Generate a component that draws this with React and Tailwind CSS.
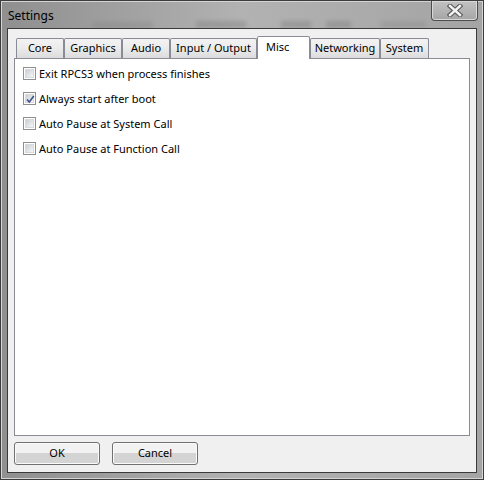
import React from "react"

const tabs = [
  { label: "Core", w: "w-[48px]" },
  { label: "Graphics", w: "w-[58px]" },
  { label: "Audio", w: "w-[48px]" },
  { label: "Input / Output", w: "w-[87px]" },
  { label: "Misc", w: "w-[53px]", active: true },
  { label: "Networking", w: "w-[70px]" },
  { label: "System", w: "w-[49px]" },
]

const options = [
  { label: "Exit RPCS3 when process finishes", checked: false },
  { label: "Always start after boot", checked: true },
  { label: "Auto Pause at System Call", checked: false },
  { label: "Auto Pause at Function Call", checked: false },
]

function Checkbox({ checked }) {
  return (
    <div className="w-[13px] h-[13px] border border-[#8e8f8f] bg-white p-[1px] shrink-0">
      <div className="relative w-full h-full bg-gradient-to-br from-[#cbcfd5] to-[#f6f6f6] border border-[#d7d9dc]">
        {checked && (
          <svg className="absolute -left-[1px] -top-[1px]" width="11" height="11" viewBox="0 0 11 11">
            <path d="M2 5.5 L4.3 8 L8.8 2" fill="none" stroke="#3e5590" strokeWidth="1.7" />
          </svg>
        )}
      </div>
    </div>
  )
}

function Tab({ label, w, active }) {
  if (active) {
    return (
      <div className={`${w} h-[23px] -mb-[1px] relative z-10 bg-white border border-b-0 border-[#898c95] rounded-t-[2px] flex items-start justify-start pl-[8px] pt-[2px] text-[11px] text-black`}>
        {label}
      </div>
    )
  }
  return (
    <div className={`${w} h-[20px] bg-gradient-to-b from-[#f3f3f3] via-[#ebebeb] to-[#dcdcdc] border border-b-0 border-[#898c95] rounded-t-[2px] flex items-center justify-center text-[11px] text-black`}>
      {label}
    </div>
  )
}

function Button({ children }) {
  return (
    <div className="w-[86px] h-[23px] rounded-[3px] border border-[#707070] bg-gradient-to-b from-[#f2f2f2] from-50% to-[#d4d4d4] to-50% shadow-[inset_0_0_0_1px_#fbfbfb] flex items-center justify-center text-[11px] text-black">
      {children}
    </div>
  )
}

export default function App() {
  return (
    <div
      className="relative overflow-hidden w-[484px] h-[480px] flex flex-col border border-[#3c3c3c] bg-gradient-to-r from-[#8f8f8f] via-[#b2b2b2] to-[#a4a4a4] shadow-[inset_0_0_0_1px_#d4d4d4] pt-[27px] px-[6px] pb-[6px]"
      style={{ fontFamily: '"Noto Sans", "Open Sans", sans-serif' }}
    >
      {/* blurred background showing through the glass */}
      <div className="absolute left-[92px] top-[21px] w-[60px] h-[6px] bg-[#7a7a7a] blur-[2px] opacity-30" />
      <div className="absolute left-[195px] top-[20px] w-[50px] h-[7px] bg-[#6a6a6a] blur-[2px] opacity-30" />
      <div className="absolute left-[280px] top-[20px] w-[30px] h-[7px] bg-[#6a6a6a] blur-[2px] opacity-30" />
      <div className="absolute left-[325px] top-[20px] w-[25px] h-[7px] bg-[#6a6a6a] blur-[2px] opacity-30" />
      <div className="absolute left-[380px] top-[20px] w-[45px] h-[7px] bg-[#7a7a7a] blur-[2px] opacity-25" />

      <div className="absolute left-[7px] top-[9px] text-[12px] leading-none text-black">Settings</div>

      <div className="absolute top-0 right-[5px] w-[47px] h-[20px] rounded-b-[4px] border border-t-0 border-[#4d4d4d] bg-gradient-to-b from-[#c2c2c2] to-[#a5a5a5] shadow-[inset_0_0_0_1px_#d9d9d9] flex items-center justify-center">
        <svg width="16" height="13" viewBox="0 0 16 13">
          <path d="M3 2 L13 11 M13 2 L3 11" stroke="#5a5a5a" strokeWidth="4.6" strokeLinecap="square" />
          <path d="M3 2 L13 11 M13 2 L3 11" stroke="#f4f4f4" strokeWidth="2.4" strokeLinecap="square" />
        </svg>
      </div>

      <div className="relative flex-1 flex flex-col bg-[#f0f0f0] border border-[#3a3a3a] pt-[7px] pl-[6px] pr-[6px] pb-[7px]">
        <div className="flex items-end h-[22px] pl-[2px]">
          {tabs.map((t) => (
            <Tab key={t.label} {...t} />
          ))}
        </div>
        <div className="h-[378px] bg-white border border-[#898c95] pt-[8px] pl-[8px] flex flex-col gap-[12px]">
          {options.map((o) => (
            <div key={o.label} className="flex items-center gap-[3px] h-[13px] text-[11px] text-black">
              <Checkbox checked={o.checked} />
              <span className="leading-none">{o.label}</span>
            </div>
          ))}
        </div>
        <div className="flex gap-[12px] mt-[6px]">
          <Button>OK</Button>
          <Button>Cancel</Button>
        </div>
      </div>
    </div>
  )
}
